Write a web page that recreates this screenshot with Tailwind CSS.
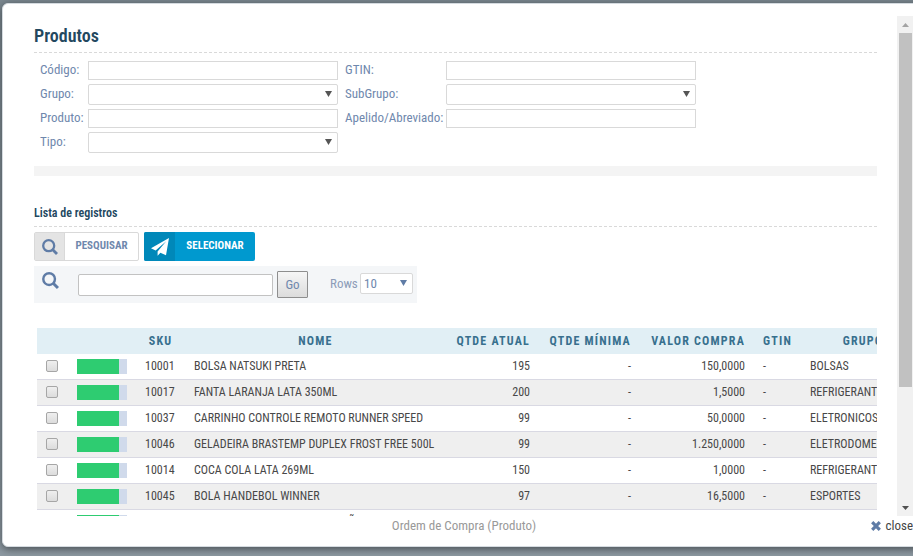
<!DOCTYPE html>
<html lang="pt-BR">

<head>
    <meta charset="UTF-8" />
    <meta name="viewport" content="width=device-width, initial-scale=1.0" />
    <title>Ordem de Compra (Produto)</title>
    <script src="https://cdn.jsdelivr.net/npm/@tailwindcss/browser@4"></script>
</head>

<body class="h-screen overflow-hidden bg-linear-to-b from-[#7b8890] to-[#8d99a2] font-['Roboto_Condensed','Roboto',sans-serif] text-[13px] text-[#6f88ad]">
    <div class="h-full pt-[3px] pb-[9px] pl-0.5">
        <!-- Modal -->
        <div class="-mr-[13px] flex h-full flex-col rounded-md border border-[#d5dbe0] bg-white px-3 pt-3 shadow-[0_2px_8px_rgba(0,0,0,0.5)]">
            <div class="flex min-h-0 flex-1">
                <main class="min-w-0 flex-1 overflow-hidden pr-5 pl-[19px]">
                    <h1 class="border-b border-dashed border-[#d9d9d9] pt-2 pb-1 text-[18px] leading-6 font-semibold text-[#23485f]">Produtos</h1>

                    <form class="mt-[5px] grid grid-cols-[48px_250px_108px_250px] items-center pl-1.5">
                        <label for="codigo" class="leading-6">Código:</label>
                        <input id="codigo" type="text" class="h-[19px] border border-[#d9d9d9] px-1" />
                        <label for="gtin" class="pl-[7px] leading-6">GTIN:</label>
                        <input id="gtin" type="text" class="h-[19px] border border-[#d9d9d9] px-1" />

                        <label for="grupo" class="leading-6">Grupo:</label>
                        <div class="relative flex">
                            <select id="grupo" class="h-[21px] w-full appearance-none rounded-xs border border-[#d9d9d9] bg-white px-1"><option></option></select>
                            <svg class="pointer-events-none absolute top-[7px] right-1.5" width="7" height="6" viewBox="0 0 7 6"><path d="M0 0h7L3.5 6z" fill="#555" /></svg>
                        </div>
                        <label for="subgrupo" class="pl-[7px] leading-6">SubGrupo:</label>
                        <div class="relative flex">
                            <select id="subgrupo" class="h-[21px] w-full appearance-none rounded-xs border border-[#d9d9d9] bg-white px-1"><option></option></select>
                            <svg class="pointer-events-none absolute top-[7px] right-1.5" width="7" height="6" viewBox="0 0 7 6"><path d="M0 0h7L3.5 6z" fill="#555" /></svg>
                        </div>

                        <label for="produto" class="leading-6">Produto:</label>
                        <input id="produto" type="text" class="h-[19px] border border-[#d9d9d9] px-1" />
                        <label for="apelido" class="pl-[7px] leading-6">Apelido/Abreviado:</label>
                        <input id="apelido" type="text" class="h-[19px] border border-[#d9d9d9] px-1" />

                        <label for="tipo" class="leading-6">Tipo:</label>
                        <div class="relative flex">
                            <select id="tipo" class="h-[21px] w-full appearance-none rounded-xs border border-[#d9d9d9] bg-white px-1"><option></option></select>
                            <svg class="pointer-events-none absolute top-[7px] right-1.5" width="7" height="6" viewBox="0 0 7 6"><path d="M0 0h7L3.5 6z" fill="#555" /></svg>
                        </div>
                    </form>

                    <div class="mt-3 h-2.5 bg-[#f4f4f4]"></div>

                    <h2 class="mt-7 border-b border-dashed border-[#d9d9d9] pb-1 text-[12px] leading-[18px] font-semibold text-[#23485f]">Lista de registros</h2>

                    <div class="mt-[5px] flex gap-[5px] text-[11px] font-bold">
                        <button type="button" class="flex h-[29px] w-[105px] items-center rounded-xs border border-[#d9d9d9] bg-white">
                            <span class="flex h-full w-[30px] items-center justify-center border-r border-[#d9d9d9] bg-[#e4e4e4]">
                                <svg width="16" height="16" viewBox="0 0 16 16" fill="none" stroke="#5f7ca6"><circle cx="6.7" cy="6.7" r="5.5" stroke-width="2.3" /><path d="M10.8 10.8l4.2 4.2" stroke-width="2.8" /></svg>
                            </span>
                            <span class="flex-1">PESQUISAR</span>
                        </button>
                        <button type="button" class="flex h-[29px] w-[111px] items-center overflow-hidden rounded-xs bg-[#0099cf] text-white">
                            <span class="flex h-full w-[31px] items-center justify-center bg-[#0088b9]">
                                <svg width="18" height="18" viewBox="0 0 18 18" fill="#fff"><path d="M18 0L0 10.2l4.6 2.2L15.2 3.2 6.6 13.4v4.4l2.8-3 5.6 2.4z" /></svg>
                            </span>
                            <span class="flex-1">SELECIONAR</span>
                        </button>
                    </div>

                    <div class="mt-[5px] flex h-[37px] w-[383px] items-center bg-[#f4f6f8]">
                        <svg class="mb-2 ml-2 shrink-0" width="17" height="17" viewBox="0 0 16 16" fill="none" stroke="#5f7ca6"><circle cx="6.7" cy="6.7" r="5.5" stroke-width="2.3" /><path d="M10.8 10.8l4.2 4.2" stroke-width="2.8" /></svg>
                        <input type="text" aria-label="Pesquisar" class="ml-[19px] h-[22px] w-[195px] rounded-xs border border-[#c2c2c2] bg-white px-1" />
                        <button type="button" class="ml-1 h-[27px] w-[31px] rounded-[1px] border border-[#8e8e8e] bg-linear-to-b from-[#f6f6f6] to-[#dcdcdc]">Go</button>
                        <div class="mb-0.5 ml-[22px] flex items-center">
                            <label for="rows" class="w-[30px] text-[#8d9db8]">Rows</label>
                            <div class="relative flex w-[53px]">
                                <select id="rows" class="h-[21px] w-full appearance-none rounded-xs border border-[#d9d9d9] bg-white px-[3px]"><option>10</option></select>
                                <svg class="pointer-events-none absolute top-[7px] right-1.5" width="7" height="6" viewBox="0 0 7 6"><path d="M0 0h7L3.5 6z" fill="#5f7ca6" /></svg>
                            </div>
                        </div>
                    </div>

                    <div class="mt-[25px] ml-[3px] overflow-hidden">
                        <table class="w-[888px] table-fixed border-separate border-spacing-0 whitespace-nowrap text-[12px] text-[#484848]">
                            <colgroup>
                                <col class="w-[31px]" />
                                <col class="w-[68px]" />
                                <col class="w-[49px]" />
                                <col class="w-[261px]" />
                                <col class="w-[93px]" />
                                <col class="w-[101px]" />
                                <col class="w-[114px]" />
                                <col class="w-[47px]" />
                                <col class="w-[124px]" />
                            </colgroup>
                            <thead>
                                <tr class="h-[26px] bg-[#e1eff5] tracking-widest text-[#38708e]">
                                    <th></th>
                                    <th></th>
                                    <th>SKU</th>
                                    <th>NOME</th>
                                    <th class="pr-[9px] text-right">QTDE ATUAL</th>
                                    <th class="pr-[9px] text-right">QTDE MÍNIMA</th>
                                    <th class="pr-[9px] text-right">VALOR COMPRA</th>
                                    <th class="pl-[9px] text-left">GTIN</th>
                                    <th>GRUPO</th>
                                </tr>
                            </thead>
                            <tbody id="registros"></tbody>
                        </table>
                    </div>
                </main>

                <!-- Scrollbar -->
                <div class="flex w-4 flex-col bg-[#f1f1f1]">
                    <div class="flex h-[17px] items-center justify-center">
                        <svg width="7" height="4" viewBox="0 0 7 4"><path d="M0 4h7L3.5 0z" fill="#a3a3a3" /></svg>
                    </div>
                    <div class="flex-1 pr-px pl-0.5">
                        <div class="h-[76%] bg-[#c1c1c1]"></div>
                    </div>
                    <div class="flex h-[17px] items-center justify-center">
                        <svg width="7" height="4" viewBox="0 0 7 4"><path d="M0 0h7L3.5 4z" fill="#505050" /></svg>
                    </div>
                </div>
            </div>

            <footer class="grid h-[30px] grid-cols-[1fr_auto_1fr] pt-0.5 leading-4">
                <span></span>
                <span class="text-[#999]">Ordem de Compra (Produto)</span>
                <a href="#" class="flex items-center gap-1 justify-self-end self-start text-[#444]">
                    <svg width="10" height="10" viewBox="0 0 10 10" stroke="#5f7ca6" stroke-width="3.2"><path d="M1.2 1.2l7.6 7.6M8.8 1.2L1.2 8.8" /></svg>
                    close
                </a>
            </footer>
        </div>
    </div>

    <script>
        const registros = [
            ["10001", "BOLSA NATSUKI PRETA", "195", "150,0000", "BOLSAS"],
            ["10017", "FANTA LARANJA LATA 350ML", "200", "1,5000", "REFRIGERANTES"],
            ["10037", "CARRINHO CONTROLE REMOTO RUNNER SPEED", "99", "50,0000", "ELETRONICOS"],
            ["10046", "GELADEIRA BRASTEMP DUPLEX FROST FREE 500L", "99", "1.250,0000", "ELETRODOMESTICOS"],
            ["10014", "COCA COLA LATA 269ML", "150", "1,0000", "REFRIGERANTES"],
            ["10045", "BOLA HANDEBOL WINNER", "97", "16,5000", "ESPORTES"],
            ["10020", "REFRIGERADOR CONSUL E BALCÃO", "98", "900,0000", "ELETRODOMESTICOS"],
        ];

        document.getElementById("registros").innerHTML = registros.map(([sku, nome, qtde, valor, grupo]) => `
            <tr class="h-[26px] even:bg-[#efefef] *:border-b *:border-[#d9d9e3]">
                <td class="pb-px pl-[9px]"><input type="checkbox" aria-label="${nome}" class="block size-3 appearance-none rounded-xs border border-[#a6a6a6] bg-linear-to-b from-[#efefef] to-[#dcdcdc]" /></td>
                <td class="pl-[9px]"><div class="h-[15px] w-[50px] bg-[#d0daeb]"><div class="h-full bg-[#2ecc71]" style="width: 84%"></div></div></td>
                <td class="pb-0.5 pl-[9px]">${sku}</td>
                <td class="pb-0.5 pl-[9px]">${nome}</td>
                <td class="pr-[9px] pb-0.5 text-right">${qtde}</td>
                <td class="pr-[9px] pb-0.5 text-right">-</td>
                <td class="pr-[9px] pb-0.5 text-right">${valor}</td>
                <td class="pb-0.5 pl-[9px]">-</td>
                <td class="pb-0.5 pl-[9px]">${grupo}</td>
            </tr>`).join("");
    </script>
</body>

</html>
